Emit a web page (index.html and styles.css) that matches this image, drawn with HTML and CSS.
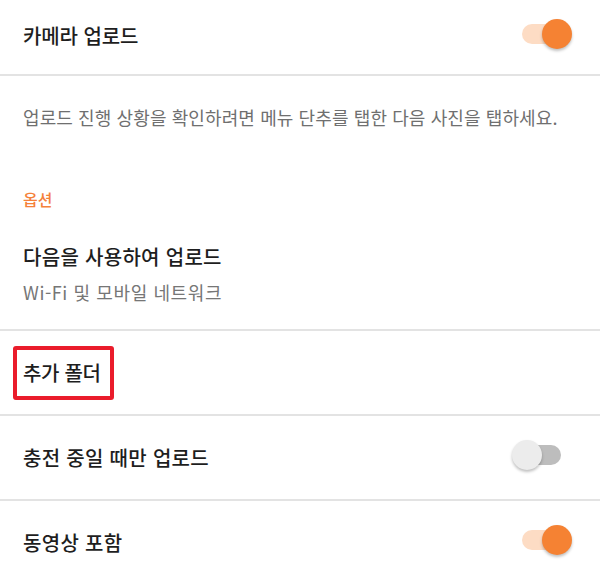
FILE: index.html
```html
<!DOCTYPE html>
<html lang="ko">
<head>
    <meta charset="UTF-8">
    <meta name="viewport" content="width=device-width, initial-scale=1.0">
    <title>카메라 업로드</title>
    <link rel="stylesheet" href="styles.css">
</head>
<body>
    <div class="settings">
        <div class="row row-first">
            <span class="row-title">카메라 업로드</span>
            <span class="switch on"><span class="thumb"></span></span>
        </div>
        <div class="divider"></div>

        <p class="description">업로드 진행 상황을 확인하려면 메뉴 단추를 탭한 다음 사진을 탭하세요.</p>

        <div class="section-header">옵션</div>

        <div class="row-two-line">
            <div class="row-title">다음을 사용하여 업로드</div>
            <div class="row-subtitle">Wi-Fi 및 모바일 네트워크</div>
        </div>
        <div class="divider"></div>

        <div class="row">
            <span class="row-title highlight">추가 폴더</span>
        </div>
        <div class="divider"></div>

        <div class="row">
            <span class="row-title">충전 중일 때만 업로드</span>
            <span class="switch"><span class="thumb"></span></span>
        </div>
        <div class="divider"></div>

        <div class="row">
            <span class="row-title">동영상 포함</span>
            <span class="switch on"><span class="thumb"></span></span>
        </div>
    </div>
</body>
</html>
```

FILE: styles.css
```css
body {
    margin: 0;
    background: #ffffff;
    font-family: "Noto Sans CJK KR", "Noto Sans", sans-serif;
    overflow: hidden;
}

.settings {
    display: flex;
    flex-direction: column;
}

.divider {
    height: 2px;
    background-color: #e3e3e3;
}

/* single line rows with an optional switch */
.row {
    display: flex;
    align-items: center;
    justify-content: space-between;
    height: 83px;
    padding: 0 39px 0 23px;
}

.row-first {
    height: 74px;
    padding-bottom: 2px;
    box-sizing: border-box;
}

.row-title {
    font-size: 20px;
    font-weight: 500;
    color: #1e1e1e;
    line-height: 28px;
    letter-spacing: 0.3px;
}

.row-first .row-title {
    letter-spacing: -0.1px;
}

.description {
    margin: 0;
    padding: 29px 23px 0;
    font-size: 18px;
    line-height: 24px;
    color: #6f6f6f;
    letter-spacing: 0.1px;
    white-space: nowrap;
}

.section-header {
    padding: 59px 23px 0;
    font-size: 16px;
    line-height: 22px;
    color: #f5813a;
    font-weight: 500;
}

.row-two-line {
    padding: 33px 23px 24px;
    display: flex;
    flex-direction: column;
    gap: 8px;
}

.row-subtitle {
    font-size: 18px;
    line-height: 26px;
    color: #767676;
    letter-spacing: 0.6px;
}

/* red box drawn around the item */
.highlight {
    display: inline-block;
    width: 101px;
    height: 54px;
    margin-left: -10px;
    padding-left: 6px;
    box-sizing: border-box;
    border: 4px solid #ea1c2b;
    border-radius: 3px;
    line-height: 46px;
    letter-spacing: -0.3px;
}

.switch {
    position: relative;
    width: 39px;
    height: 20px;
    border-radius: 10px;
    background-color: #bdbdbd;
    margin-top: -5px;
}

.switch .thumb {
    position: absolute;
    top: -5px;
    left: -10px;
    width: 30px;
    height: 30px;
    border-radius: 50%;
    background-color: #ececec;
    box-shadow: 0 2px 3px rgba(0, 0, 0, 0.25);
}

.switch.on {
    background-color: #fddcc4;
}

.switch.on .thumb {
    left: 20px;
    background-color: #f58233;
}
```
